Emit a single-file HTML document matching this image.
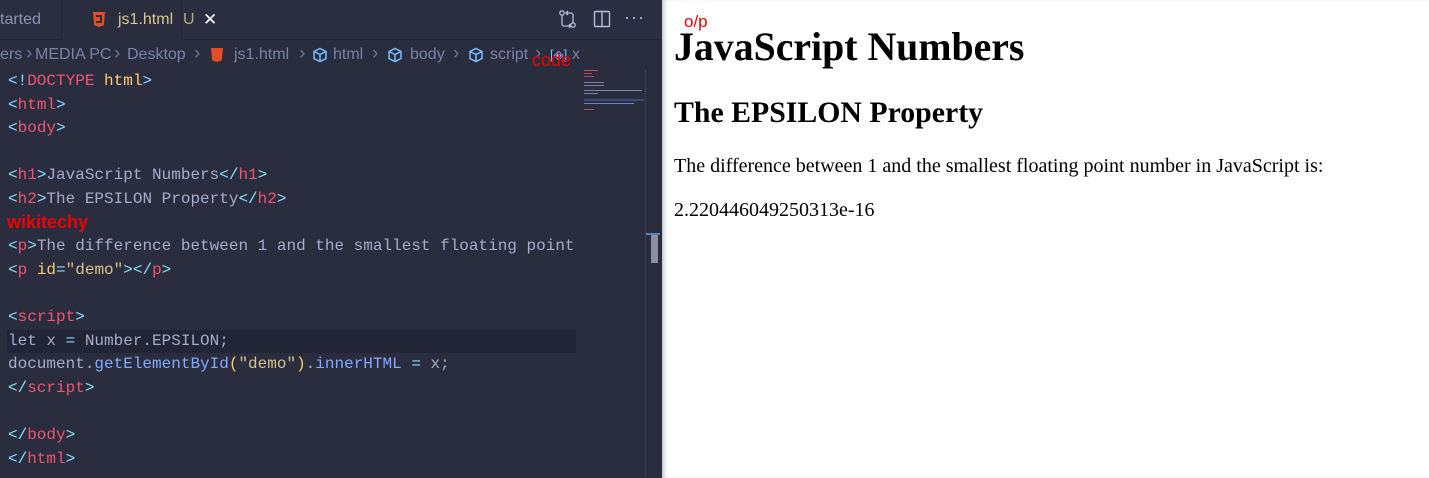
<!DOCTYPE html>
<html><head><style>
*{margin:0;padding:0;box-sizing:border-box}
body{width:1429px;height:478px;overflow:hidden;background:#fff;position:relative;font-family:"Liberation Sans",sans-serif}
#ed{position:absolute;left:0;top:0;width:662px;height:478px;background:#292d3e}
#tabs{position:absolute;left:0;top:0;width:662px;height:40px;background:#2a2e40;border-bottom:1px solid #24273a}
.tab{position:absolute;top:0;height:40px;font-size:16px;line-height:40px}
#crumb{position:absolute;left:0;top:40px;height:30px;width:662px;font-size:16px;line-height:30px;color:#7b82a8;white-space:nowrap}
.ch{font-size:19px;color:#6b7298;top:-1px}
#crumb span{position:absolute}
#code{position:absolute;left:8px;top:70px;font-family:"Liberation Mono",monospace;font-size:16px;line-height:23.6px;color:#a6accd;white-space:pre}
.t{color:#f0556f}.b{color:#89ddff}.a{color:#ffcb6b}.s{color:#d8c08a}.f{color:#82aaff}
#out{position:absolute;left:662px;top:0;width:767px;height:478px;background:#fff;font-family:"Liberation Serif",serif;color:#000;box-shadow:inset 4px 0 4px -2px rgba(0,0,0,.25)}
</style></head><body>
<div id="ed">
 <div id="tabs">
  <div class="tab" style="left:0;width:62px;color:#8c92b0;border-right:1px solid #24273a">tarted</div>
  <div class="tab" style="left:62px;width:120px;background:#292d3e;color:#d7c98a;border-right:1px solid #24273a">
   <span style="position:absolute;left:31px;top:12px;width:12px;height:15px;background:#e44d26;clip-path:polygon(0 0,100% 0,90% 88%,50% 100%,10% 88%)"></span>
   <span style="position:absolute;left:34px;top:15px;width:6px;height:8px;border:2px solid #292d3e;border-left:none;border-radius:0 1px 1px 0"></span>
   <span style="position:absolute;left:56px">js1.html</span>
  </div>
  <span style="position:absolute;left:183px;top:0;line-height:40px;font-size:16px;color:#b9ab7c">U</span>
  <span style="position:absolute;left:203px;top:0;line-height:40px;color:#fff;font-size:17px">✕</span>
  <div style="position:absolute;left:181px;top:0;width:1px;height:40px;background:#24273a"></div>
  <svg style="position:absolute;left:558px;top:9px" width="20" height="20" viewBox="0 0 20 20" fill="none" stroke="#b8bed8" stroke-width="1.3"><circle cx="4" cy="4" r="2.2"/><circle cx="15" cy="16" r="2.2"/><path d="M4 6.5V15a2 2 0 0 0 2 2h6.5M11 15l1.8 2L11 19"/><path d="M15 13.5V6a2 2 0 0 0-2-2H8M10 2L8 4l2 2"/></svg>
  <svg style="position:absolute;left:593px;top:10px" width="18" height="18" viewBox="0 0 18 18" fill="none" stroke="#b8bed8" stroke-width="1.4"><rect x="1.5" y="1.5" width="15" height="15" rx="1"/><path d="M9 1.5v15"/></svg>
  <div style="position:absolute;left:624px;top:7px;color:#b8bed8;font-size:18px;letter-spacing:1px">···</div>
 </div>
 <div id="crumb">
  <span style="left:0">ers</span><span class="ch" style="left:26px">›</span>
  <span style="left:35px">MEDIA PC</span><span class="ch" style="left:114px">›</span>
  <span style="left:127px">Desktop</span><span class="ch" style="left:194px">›</span>
  <span style="left:211px;top:8px;width:12px;height:14px;background:#e44d26;clip-path:polygon(0 0,100% 0,90% 88%,50% 100%,10% 88%)"></span>
  <span style="left:234px">js1.html</span><span class="ch" style="left:299px">›</span>
  <svg style="position:absolute;left:312px;top:7px" width="16" height="16" viewBox="0 0 16 16" fill="none" stroke="#75beff" stroke-width="1.5"><path d="M8 1.5l6 3v7l-6 3-6-3v-7z M2 4.5l6 3 6-3 M8 7.5v7"/></svg>
  <span style="left:333px">html</span><span class="ch" style="left:372px">›</span>
  <svg style="position:absolute;left:387px;top:7px" width="16" height="16" viewBox="0 0 16 16" fill="none" stroke="#75beff" stroke-width="1.5"><path d="M8 1.5l6 3v7l-6 3-6-3v-7z M2 4.5l6 3 6-3 M8 7.5v7"/></svg>
  <span style="left:410px">body</span><span class="ch" style="left:453px">›</span>
  <svg style="position:absolute;left:468px;top:7px" width="16" height="16" viewBox="0 0 16 16" fill="none" stroke="#75beff" stroke-width="1.5"><path d="M8 1.5l6 3v7l-6 3-6-3v-7z M2 4.5l6 3 6-3 M8 7.5v7"/></svg>
  <span style="left:490px">script</span><span class="ch" style="left:535px">›</span>
  <span style="left:550px;color:#75beff;font-size:13px">[◈]</span>
  <span style="left:572px">x</span>
  <span style="left:532px;top:5px;color:#e00;font-size:18px">code</span>
 </div>
 <div style="position:absolute;left:645px;top:70px;width:1px;height:408px;background:#3a3f55"></div>
 <div style="position:absolute;left:646px;top:233px;width:14px;height:2px;background:#5a7fbf"></div>
 <div style="position:absolute;left:651px;top:235px;width:7px;height:28px;background:#8a8fa2"></div>
 <div style="position:absolute;left:584px;top:69px;width:60px;height:40px;opacity:.7">
  <div style="height:1px;width:14px;background:#f0556f;margin-top:1px"></div>
  <div style="height:1px;width:8px;background:#f0556f;margin-top:2px"></div>
  <div style="height:1px;width:10px;background:#f0556f;margin-top:2px"></div>
  <div style="height:1px;width:20px;background:#a6accd;margin-top:5px"></div>
  <div style="height:1px;width:20px;background:#a6accd;margin-top:2px"></div>
  <div style="height:1px;width:58px;background:#a6accd;margin-top:4px"></div>
  <div style="height:1px;width:14px;background:#a6accd;margin-top:2px"></div>
  <div style="height:2px;width:60px;background:#4a5a8a;margin-top:5px"></div>
  <div style="height:1px;width:50px;background:#82aaff;margin-top:2px"></div>
  <div style="height:1px;width:10px;background:#f0556f;margin-top:5px"></div>
 </div>
 <div style="position:absolute;left:7px;top:330px;width:569px;height:23px;background:#222535"></div>
 <div id="code"><span class="b">&lt;!</span><span class="t">DOCTYPE</span> <span class="a">html</span><span class="b">&gt;</span>
<span class="b">&lt;</span><span class="t">html</span><span class="b">&gt;</span>
<span class="b">&lt;</span><span class="t">body</span><span class="b">&gt;</span>

<span class="b">&lt;</span><span class="t">h1</span><span class="b">&gt;</span>JavaScript Numbers<span class="b">&lt;/</span><span class="t">h1</span><span class="b">&gt;</span>
<span class="b">&lt;</span><span class="t">h2</span><span class="b">&gt;</span>The EPSILON Property<span class="b">&lt;/</span><span class="t">h2</span><span class="b">&gt;</span>

<span class="b">&lt;</span><span class="t">p</span><span class="b">&gt;</span>The difference between 1 and the smallest floating point
<span class="b">&lt;</span><span class="t">p</span> <span class="a">id</span><span class="b">=</span><span class="s">"demo"</span><span class="b">&gt;&lt;/</span><span class="t">p</span><span class="b">&gt;</span>

<span class="b">&lt;</span><span class="t">script</span><span class="b">&gt;</span>
let x <span class="b">=</span> Number.EPSILON;
document.<span class="f">getElementById</span><span class="a">(</span><span class="s">"demo"</span><span class="a">)</span>.<span class="f">innerHTML</span> <span class="b">=</span> x;
<span class="b">&lt;/</span><span class="t">script</span><span class="b">&gt;</span>

<span class="b">&lt;/</span><span class="t">body</span><span class="b">&gt;</span>
<span class="b">&lt;/</span><span class="t">html</span><span class="b">&gt;</span></div>
 <div style="position:absolute;left:7px;top:212px;color:#e00;font-size:18px;font-weight:bold;font-family:'Liberation Sans',sans-serif">wikitechy</div>
</div>
<div id="out">
 <div style="position:absolute;left:22px;top:12px;color:#e00;font-family:'Liberation Sans',sans-serif;font-size:17px">o/p</div>
 <div style="position:absolute;left:12px;top:24px;font-size:39.8px;font-weight:bold;white-space:nowrap">JavaScript Numbers</div>
 <div style="position:absolute;left:12px;top:96px;font-size:29.8px;font-weight:bold;white-space:nowrap">The EPSILON Property</div>
 <div style="position:absolute;left:12px;top:155px;font-size:20px;white-space:nowrap">The difference between 1 and the smallest floating point number in JavaScript is:</div>
 <div style="position:absolute;left:12px;top:199px;font-size:20px;white-space:nowrap">2.220446049250313e-16</div>
</div>
</body></html>
